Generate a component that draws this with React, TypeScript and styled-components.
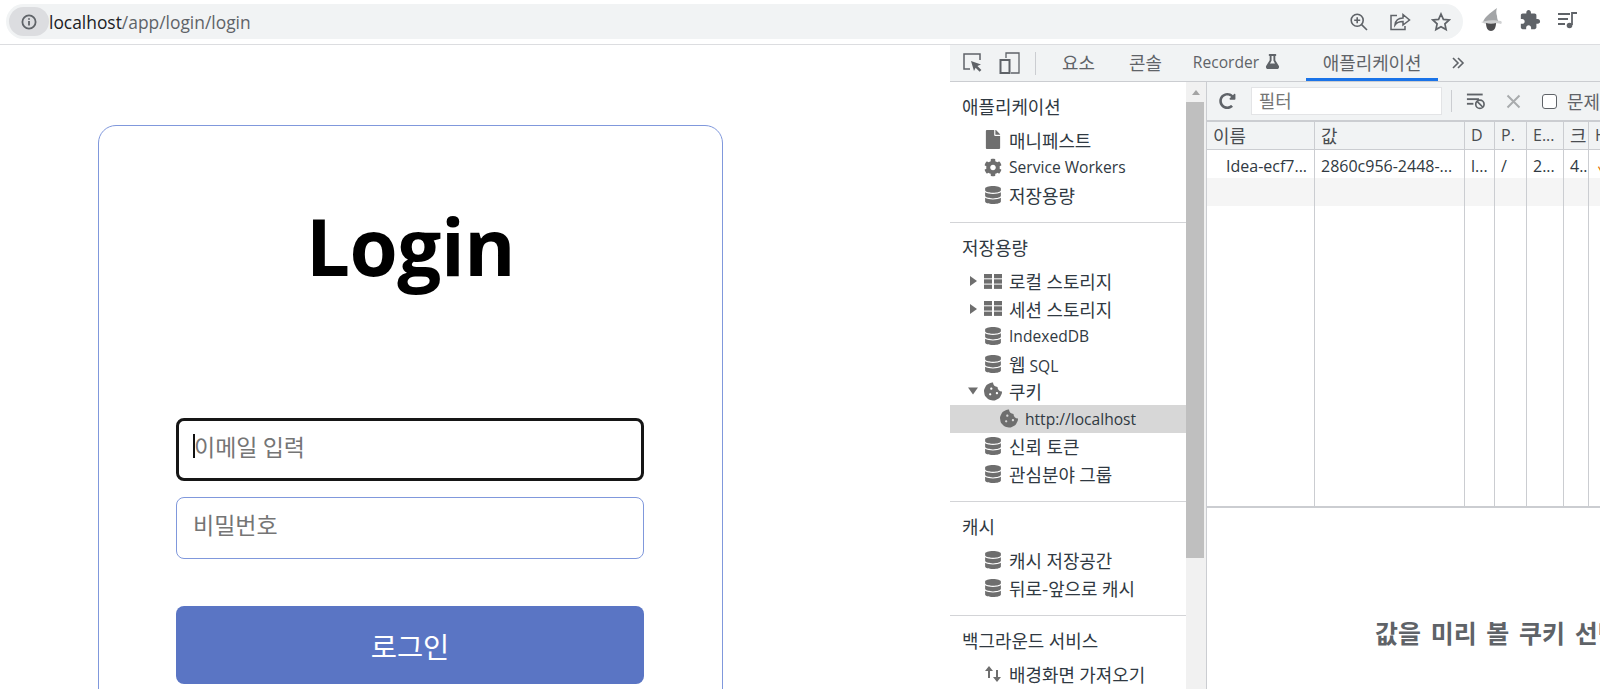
import React from "react";
import styled, { createGlobalStyle } from "styled-components";
import { FaCog, FaCookieBite, FaDatabase, FaFile, FaFlask, FaRedoAlt } from "react-icons/fa";

const Global = createGlobalStyle`
  html, body { margin: 0; padding: 0; height: 100%; background: #fff; overflow: hidden; }
  * { box-sizing: border-box; }
  body { font-family: "Open Sans", "Noto Sans CJK KR", sans-serif; }
`;

const Page = styled.div`
  width: 1600px; height: 689px; display: flex; flex-direction: column; overflow: hidden;
`;
const BrowserBar = styled.header`
  height: 45px; flex: none; display: flex; align-items: flex-start; padding: 4px 0 0 6px; border-bottom: 1px solid #dcdde0; background: #fff;
`;
const Omnibox = styled.div`
  width: 1457px; height: 35px; background: #f1f3f4; border-radius: 18px; display: flex; align-items: center; padding: 0 12px 0 3px; flex: none;
`;
const InfoPill = styled.div`
  width: 40px; height: 29px; border-radius: 15px; background: #dcdde0; display: flex; align-items: center; justify-content: center; color: #5f6368; flex: none;
`;
const Url = styled.div`
  font-size: 17.4px; color: #5f6368; flex: 1; font-family: "Open Sans", sans-serif;
  b { font-weight: 400; color: #202124; }
`;
const BarIcons = styled.div`
  display: flex; gap: 20px; align-items: center; color: #5f6368;
`;
const ExtIcons = styled.div`
  display: flex; align-items: center; gap: 16px; margin-left: 16px; padding-top: 3px; color: #5f6368;
`;
const Body = styled.div`
  flex: 1; display: flex; min-height: 0;
`;
const PageArea = styled.main`
  width: 950px; flex: none; padding: 80px 0 0 98px; overflow: hidden; background: #fff;
`;
const Card = styled.section`
  width: 625px; height: 720px; border: 1px solid #8098dc; border-radius: 18px; padding: 0 77px; display: flex; flex-direction: column;
`;
const Title = styled.h1`
  margin: 67px 0 0; font-size: 78px; line-height: 106px; font-weight: 700; color: #000; text-align: center; font-family: "Open Sans", sans-serif; letter-spacing: -0.5px;
`;
const Field = styled.div<{ $focused?: boolean }>`
  height: ${(p) => (p.$focused ? "63px" : "62px")}; width: 468px; border-radius: 8px; background: #fff;
  border: ${(p) => (p.$focused ? "3px solid #161616" : "1px solid #8098dc")};
  padding: ${(p) => (p.$focused ? "0 14px" : "0 16px")};
  display: flex; align-items: flex-start;
  font-family: "Noto Sans CJK KR", sans-serif; font-size: 23px; color: #757575;
  margin-top: ${(p) => (p.$focused ? "119px" : "16px")};
  line-height: ${(p) => (p.$focused ? "50px" : "52px")};
`;
const Caret = styled.span`
  width: 2px; height: 24px; background: #111; margin-top: 13px; margin-right: -1px; flex: none;
`;
const LoginButton = styled.button`
  margin-top: 47px; height: 78px; width: 468px; border: none; border-radius: 8px; background: #5a75c4; color: #fff;
  font-family: "Noto Sans CJK KR", sans-serif; font-size: 28.5px; padding: 0;
`;
const DevTools = styled.aside`
  width: 650px; flex: none; display: flex; flex-direction: column; font-size: 15.6px; color: #3c4043; min-height: 0;
  font-family: "Open Sans", "Noto Sans CJK KR", sans-serif;
`;
const Ko = styled.span`
  font-family: "Noto Sans CJK KR", sans-serif; font-size: 17.9px; word-spacing: 0.5px;
`;
const TabBar = styled.nav`
  height: 37px; flex: none; background: #f1f3f4; border-bottom: 1px solid #cbcdd1; display: flex; align-items: center; padding-left: 12px; white-space: nowrap;
`;
const TabIcons = styled.div`
  display: flex; gap: 15px; align-items: center; padding-right: 14px; border-right: 1px solid #cbcdd1; height: 23px; color: #5f6368; margin-right: 9px;
`;
const Tab = styled.div<{ $active?: boolean; $tight?: boolean }>`
  height: 36px; display: flex; align-items: center; justify-content: center; gap: 6px; padding: 0 17px; color: #5f6368;
  border-bottom: 3px solid ${(p) => (p.$active ? "#1a73e8" : "transparent")};
  ${(p) => (p.$active ? "margin-left: 9px; width: 132px;" : "")}
  ${(p) => (p.$tight ? "padding-left: 14px;" : "")}
`;
const More = styled.span`
  color: #5f6368; margin-left: 13px; display: flex;
`;
const Split = styled.div`
  flex: 1; display: flex; min-height: 0;
`;
const Sidebar = styled.div`
  width: 236px; flex: none; overflow: hidden; background: #fff; padding-top: 10.5px;
`;
const Scrollbar = styled.div`
  width: 21px; flex: none; background: #f1f1f1; display: flex; flex-direction: column; align-items: center; border-right: 1px solid #cbcdd1;
`;
const ScrollArrow = styled.div`
  height: 20px; flex: none; display: flex; align-items: center; justify-content: center;
  &::before { content: ""; border-left: 4px solid transparent; border-right: 4px solid transparent; border-bottom: 5px solid #a3a3a3; }
`;
const ScrollThumb = styled.div`
  width: 18px; height: 456px; background: #bfbfbf; margin-right: 2px;
`;
const Section = styled.div`
  border-bottom: 1px solid #d3d4d7; padding-bottom: 13.5px; margin-bottom: 11px;
  &:last-child { border-bottom: none; }
`;
const SectionTitle = styled.div`
  height: 27px; line-height: 27px; padding-left: 12px; margin-bottom: 6.5px; color: #303942; white-space: nowrap;
`;
const Row = styled.div<{ $depth?: number; $selected?: boolean }>`
  height: 27.5px; display: flex; align-items: center; white-space: nowrap; color: #303942;
  padding-left: ${(p) => (p.$depth ? 50 : 34)}px;
  background: ${(p) => (p.$selected ? "#d7d7d7" : "transparent")};
  position: relative;
`;
const RowIcon = styled.span`
  width: 18px; height: 18px; display: flex; align-items: center; justify-content: center; color: #6e6e6e; margin-right: 7px; flex: none;
`;
const Twist = styled.span<{ $open?: boolean }>`
  position: absolute; left: 20px; top: 50%; transform: translateY(-50%);
  ${(p) =>
    p.$open
      ? "left: 18px; border-left: 5px solid transparent; border-right: 5px solid transparent; border-top: 7px solid #6e6e6e;"
      : "border-top: 5px solid transparent; border-bottom: 5px solid transparent; border-left: 7px solid #6e6e6e;"}
`;
const Main = styled.div`
  flex: 1; display: flex; flex-direction: column; min-width: 0; overflow: hidden;
`;
const Toolbar = styled.div`
  height: 38px; flex: none; display: flex; align-items: center; background: #f1f3f4; padding-left: 12px; color: #5f6368; white-space: nowrap;
`;
const FilterInput = styled.div`
  width: 191px; height: 28px; margin-left: 15px; background: #fff; border: 1px solid #e3e4e6; padding-left: 7px; line-height: 25px; color: #757575; flex: none;
`;
const ToolDivider = styled.span`
  width: 1px; height: 22px; background: #cbcdd1; margin: 0 14px 0 9px; flex: none;
`;
const ClearX = styled.svg`
  margin-left: 20px; flex: none;
`;
const CheckBox = styled.span`
  width: 15px; height: 15px; border: 1.5px solid #5f6368; border-radius: 3px; background: #fff; margin: 0 10px 0 21px; flex: none;
`;
const Table = styled.div`
  height: 388px; flex: none; border-top: 2px solid #cbcdd1; border-bottom: 2px solid #cbcdd1; display: grid; grid-template-columns: 108px 150px 30px 32px 37px 25px 30px; grid-template-rows: 28px 28px 28px 1fr; overflow: hidden; font-size: 16px;
`;
const Cell = styled.div<{ $head?: boolean; $shade?: boolean; $indent?: boolean }>`
  border-right: 1px solid #cbcdd1;
  padding-left: ${(p) => (p.$indent ? 19 : 6)}px;
  line-height: ${(p) => (p.$head ? 27 : 33)}px; white-space: nowrap; overflow: hidden; color: #303942;
  background: ${(p) => (p.$head ? "#f1f3f4" : p.$shade ? "#f5f5f5" : "#fff")};
  ${(p) => (p.$head ? "border-bottom: 1px solid #cbcdd1; color: #4a4d51;" : "")}
`;
const Tick = styled.span`
  color: #e37400; margin-left: 3px;
`;
const Preview = styled.div`
  flex: 1; display: flex; align-items: center; padding: 66px 0 0 168px; font-size: 25px; word-spacing: 4px; font-weight: 700; color: #5f6368; white-space: nowrap; font-family: "Noto Sans CJK KR", sans-serif;
`;

const T = ({ children }: { children: string }) => (
  <>
    {children.split(/([\uAC00-\uD7A3]+(?:[\s-]+[\uAC00-\uD7A3]+)*)/).map((part, i) =>
      i % 2 ? <Ko key={i}>{part}</Ko> : part
    )}
  </>
);

const Db = () => <FaDatabase size={18} />;
const Grid = () => (
  <svg width="18" height="15" viewBox="0 0 18 15" fill="currentColor">
    <rect x="0" y="0" width="8" height="4.300" /><rect x="10" y="0" width="8" height="4.300" />
    <rect x="0" y="5.300" width="8" height="4.300" /><rect x="10" y="5.300" width="8" height="4.300" />
    <rect x="0" y="10.600" width="8" height="4.300" /><rect x="10" y="10.600" width="8" height="4.300" />
  </svg>
);

const NavRow = ({ icon, label, twist, depth, selected }: { icon: React.ReactNode; label: string; twist?: "open" | "closed"; depth?: number; selected?: boolean }) => (
  <Row $depth={depth} $selected={selected}>
    {twist && <Twist $open={twist === "open"} />}
    <RowIcon>{icon}</RowIcon>
    <span><T>{label}</T></span>
  </Row>
);

const head = ["이름", "값", "D", "P.", "E...", "크", "H"];
const row = ["Idea-ecf7...", "2860c956-2448-...", "l...", "/", "2...", "4..", ""];

export default function App() {
  return (
    <Page>
      <Global />
      <BrowserBar>
        <Omnibox>
          <InfoPill>
            <svg width="18" height="18" viewBox="0 0 18 18" fill="none" stroke="currentColor" strokeWidth="1.8">
              <circle cx="9" cy="9" r="6.600" />
              <path d="M9 8v4.600M9 5.200v1.600" />
            </svg>
          </InfoPill>
          <Url><b>localhost</b>/app/login/login</Url>
          <BarIcons>
            <svg width="20" height="20" viewBox="0 0 20 20" fill="none" stroke="currentColor" strokeWidth="1.6">
              <circle cx="8.200" cy="8.200" r="6" /><path d="M12.600 12.600 18 18M5.200 8.200h6M8.200 5.200v6" />
            </svg>
            <svg width="22" height="20" viewBox="0 0 22 20" fill="none" stroke="currentColor" strokeWidth="1.5">
              <path d="M8 3.500H2v14h14v-3.500" /><path d="M6 13c.5-4.500 3.500-7 8-7V2.500L20.500 8 14 13V9.600c-3.600 0-6.300 1-8 3.400z" />
            </svg>
            <svg width="20" height="20" viewBox="0 0 20 20" fill="none" stroke="currentColor" strokeWidth="1.7">
              <path d="m10 2 2.400 5.400 5.800.6-4.300 3.900 1.200 5.700L10 14.700l-5.100 2.900 1.200-5.700L1.800 8l5.800-.6z" />
            </svg>
          </BarIcons>
        </Omnibox>
        <ExtIcons>
          <svg width="24" height="26" viewBox="0 0 24 26">
            <path d="M18 1c-3 2-7 5-10 8-3 3-4 5-4 7 4-2 11-2 16-1-1-1-2-3-2-6-1-3-1-5 0-8z" fill="#a3a5a7" />
            <path d="M2 15c4-1 9-3 20-1 1 1 1 2 0 3-2-1-5-1-8 0-4 1-8 0-12-2z" fill="#d0d1d2" />
            <path d="M7 16c3 1 7 1 10 0 0 5-2 8-5 8s-5-3-5-8z" fill="#4d4d4f" />
          </svg>
          <svg width="22" height="22" viewBox="0 0 24 24" fill="currentColor">
            <path d="M20.500 11H19V7c0-1.100-.9-2-2-2h-4V3.500C13 2.120 11.880 1 10.500 1S8 2.120 8 3.500V5H4c-1.100 0-1.990.9-1.990 2v3.800H3.500c1.490 0 2.700 1.210 2.700 2.700s-1.210 2.700-2.700 2.700H2V20c0 1.100.9 2 2 2h3.800v-1.500c0-1.490 1.210-2.700 2.700-2.700 1.490 0 2.700 1.210 2.700 2.700V22H17c1.100 0 2-.9 2-2v-4h1.500c1.380 0 2.500-1.120 2.500-2.500S21.880 11 20.500 11z" />
          </svg>
          <svg width="21" height="20" viewBox="0 0 21 20" fill="none" stroke="currentColor" strokeWidth="1.8">
            <path d="M1 4h12M1 9h10M1 14h7M15 15V3h5" />
            <circle cx="12.500" cy="15.500" r="2.800" fill="currentColor" stroke="none" />
          </svg>
        </ExtIcons>
      </BrowserBar>
      <Body>
        <PageArea>
          <Card>
            <Title>Login</Title>
            <Field $focused><Caret />이메일 입력</Field>
            <Field>비밀번호</Field>
            <LoginButton>로그인</LoginButton>
          </Card>
        </PageArea>
        <DevTools>
          <TabBar>
            <TabIcons>
              <svg width="22" height="22" viewBox="0 0 22 22" fill="none" stroke="currentColor" strokeWidth="1.500">
                <path d="M8 17H2V2h16v6" /><path d="M9 9l10 3.500-3.600 1.400 4 4-1.800 1.800-4-4L12 19z" fill="currentColor" stroke="none" />
              </svg>
              <svg width="22" height="24" viewBox="0 0 22 24" fill="none" stroke="currentColor">
                <path d="M7 7V2h13v20H12" strokeWidth="1.300" /><rect x="1.500" y="9" width="9" height="13" strokeWidth="2" />
              </svg>
            </TabIcons>
            <Tab><T>요소</T></Tab>
            <Tab><T>콘솔</T></Tab>
            <Tab $tight>Recorder <FaFlask size={15} /></Tab>
            <Tab $active><T>애플리케이션</T></Tab>
            <More>
              <svg width="14" height="14" viewBox="0 0 14 14" fill="none" stroke="currentColor" strokeWidth="1.600">
                <path d="m2 2 5 5-5 5M7 2l5 5-5 5" />
              </svg>
            </More>
          </TabBar>
          <Split>
            <Sidebar>
              <Section>
                <SectionTitle><T>애플리케이션</T></SectionTitle>
                <NavRow icon={<FaFile size={19} />} label="매니페스트" />
                <NavRow icon={<FaCog size={19} />} label="Service Workers" />
                <NavRow icon={<Db />} label="저장용량" />
              </Section>
              <Section>
                <SectionTitle><T>저장용량</T></SectionTitle>
                <NavRow icon={<Grid />} label="로컬 스토리지" twist="closed" />
                <NavRow icon={<Grid />} label="세션 스토리지" twist="closed" />
                <NavRow icon={<Db />} label="IndexedDB" />
                <NavRow icon={<Db />} label="웹 SQL" />
                <NavRow icon={<FaCookieBite size={19} />} label="쿠키" twist="open" />
                <NavRow icon={<FaCookieBite size={19} />} label="http://localhost" depth={1} selected />
                <NavRow icon={<Db />} label="신뢰 토큰" />
                <NavRow icon={<Db />} label="관심분야 그룹" />
              </Section>
              <Section>
                <SectionTitle><T>캐시</T></SectionTitle>
                <NavRow icon={<Db />} label="캐시 저장공간" />
                <NavRow icon={<Db />} label="뒤로-앞으로 캐시" />
              </Section>
              <Section>
                <SectionTitle><T>백그라운드 서비스</T></SectionTitle>
                <NavRow
                  icon={
                    <svg width="18" height="18" viewBox="0 0 18 18" fill="currentColor">
                      <path d="M5 1 1 6h3v7h2V6h3zM12 5v7H9l4 5 4-5h-3V5z" />
                    </svg>
                  }
                  label="배경화면 가져오기"
                />
              </Section>
            </Sidebar>
            <Scrollbar>
              <ScrollArrow />
              <ScrollThumb />
            </Scrollbar>
            <Main>
              <Toolbar>
                <FaRedoAlt size={18} />
                <FilterInput><T>필터</T></FilterInput>
                <ToolDivider />
                <svg width="22" height="20" viewBox="0 0 22 20" fill="currentColor">
                  <rect x="1" y="2" width="17" height="2" /><rect x="1" y="7" width="13" height="2" /><rect x="1" y="12" width="7" height="2" />
                  <circle cx="15" cy="13.500" r="4.500" fill="none" stroke="currentColor" strokeWidth="1.800" /><path d="m12 10.500 6 6" stroke="currentColor" strokeWidth="1.800" />
                </svg>
                <ClearX width="15" height="15" viewBox="0 0 15 15" stroke="#a9abad" strokeWidth="2" fill="none"><path d="m1.500 1.500 12 12M13.500 1.500l-12 12" /></ClearX>
                <CheckBox />
                <T>문제</T>
              </Toolbar>
              <Table>
                {head.map((h) => <Cell key={h} $head><T>{h}</T></Cell>)}
                {row.map((c, i) => <Cell key={i} $indent={i === 0}>{i === 6 ? <Tick>✓</Tick> : c}</Cell>)}
                {row.map((_, i) => <Cell key={i} $shade />)}
                {row.map((_, i) => <Cell key={i} />)}
              </Table>
              <Preview>값을 미리 볼 쿠키 선택</Preview>
            </Main>
          </Split>
        </DevTools>
      </Body>
    </Page>
  );
}
